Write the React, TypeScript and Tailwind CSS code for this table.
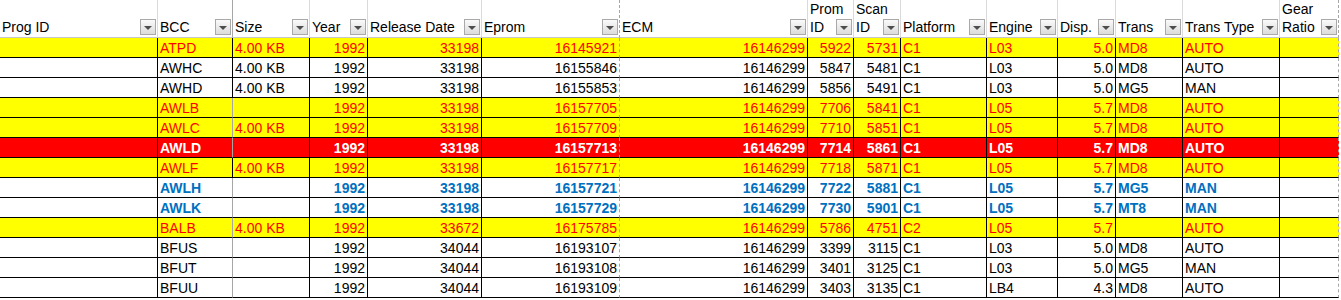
import React from "react";

type Tone = "yellow" | "white" | "red" | "blue";

type Row = {
  cells: string[];
  tone: Tone;
  // size cell has its own box border on the left
  boxed?: boolean;
};

type Col = {
  label: string[];
  width: number;
  right?: boolean;
  edge: "solid" | "dashed";
};

const cols: Col[] = [
  { label: ["Prog ID"], width: 158, edge: "solid" },
  { label: ["BCC"], width: 75, edge: "solid" },
  { label: ["Size"], width: 77, edge: "solid" },
  { label: ["Year"], width: 58, right: true, edge: "solid" },
  { label: ["Release Date"], width: 114, right: true, edge: "solid" },
  { label: ["Eprom"], width: 138, right: true, edge: "dashed" },
  { label: ["ECM"], width: 188, right: true, edge: "solid" },
  { label: ["Prom", "ID"], width: 46, right: true, edge: "solid" },
  { label: ["Scan", "ID"], width: 47, right: true, edge: "solid" },
  { label: ["Platform"], width: 86, edge: "solid" },
  { label: ["Engine"], width: 71, edge: "solid" },
  { label: ["Disp."], width: 58, right: true, edge: "solid" },
  { label: ["Trans"], width: 67, edge: "solid" },
  { label: ["Trans Type"], width: 97, edge: "solid" },
  { label: ["Gear", "Ratio"], width: 59, edge: "dashed" },
];

const rows: Row[] = [
  { tone: "yellow", boxed: true, cells: ["", "ATPD", "4.00 KB", "1992", "33198", "16145921", "16146299", "5922", "5731", "C1", "L03", "5.0", "MD8", "AUTO", ""] },
  { tone: "white", boxed: true, cells: ["", "AWHC", "4.00 KB", "1992", "33198", "16155846", "16146299", "5847", "5481", "C1", "L03", "5.0", "MD8", "AUTO", ""] },
  { tone: "white", boxed: true, cells: ["", "AWHD", "4.00 KB", "1992", "33198", "16155853", "16146299", "5856", "5491", "C1", "L03", "5.0", "MG5", "MAN", ""] },
  { tone: "yellow", cells: ["", "AWLB", "", "1992", "33198", "16157705", "16146299", "7706", "5841", "C1", "L05", "5.7", "MD8", "AUTO", ""] },
  { tone: "yellow", cells: ["", "AWLC", "4.00 KB", "1992", "33198", "16157709", "16146299", "7710", "5851", "C1", "L05", "5.7", "MD8", "AUTO", ""] },
  { tone: "red", cells: ["", "AWLD", "", "1992", "33198", "16157713", "16146299", "7714", "5861", "C1", "L05", "5.7", "MD8", "AUTO", ""] },
  { tone: "yellow", boxed: true, cells: ["", "AWLF", "4.00 KB", "1992", "33198", "16157717", "16146299", "7718", "5871", "C1", "L05", "5.7", "MD8", "AUTO", ""] },
  { tone: "blue", cells: ["", "AWLH", "", "1992", "33198", "16157721", "16146299", "7722", "5881", "C1", "L05", "5.7", "MG5", "MAN", ""] },
  { tone: "blue", cells: ["", "AWLK", "", "1992", "33198", "16157729", "16146299", "7730", "5901", "C1", "L05", "5.7", "MT8", "MAN", ""] },
  { tone: "yellow", cells: ["", "BALB", "4.00 KB", "1992", "33672", "16175785", "16146299", "5786", "4751", "C2", "L05", "5.7", "", "AUTO", ""] },
  { tone: "white", cells: ["", "BFUS", "", "1992", "34044", "16193107", "16146299", "3399", "3115", "C1", "L03", "5.0", "MD8", "AUTO", ""] },
  { tone: "white", cells: ["", "BFUT", "", "1992", "34044", "16193108", "16146299", "3401", "3125", "C1", "L03", "5.0", "MG5", "MAN", ""] },
  { tone: "white", cells: ["", "BFUU", "", "1992", "34044", "16193109", "16146299", "3403", "3135", "C1", "LB4", "4.3", "MD8", "AUTO", ""] },
];

const toneClass: Record<Tone, string> = {
  yellow: "bg-[#ffff00] text-[#ff0000]",
  white: "bg-white text-black",
  red: "bg-[#ff0000] text-white font-bold",
  blue: "bg-white text-[#0070c0] font-bold",
};

function FilterButton() {
  return (
    <span className="absolute right-[1px] bottom-[2px] flex h-[16px] w-[16px] items-center justify-center border border-[#a9a9a9] bg-linear-to-b from-[#fafafa] to-[#dcdcdc]">
      <span className="mt-[1px] h-0 w-0 border-x-[4px] border-t-[4px] border-x-transparent border-t-[#4d4d4d]" />
    </span>
  );
}

export default function App() {
  return (
    <div className="h-[300px] w-[1341px] overflow-hidden bg-white font-['Liberation_Sans',Arial,sans-serif] text-[14px] leading-[18px] text-black">
      <table className="table-fixed border-separate border-spacing-0" style={{ width: 1339 }}>
        <colgroup>
          {cols.map((c, i) => (
            <col key={i} style={{ width: c.width }} />
          ))}
        </colgroup>
        <thead>
          <tr className="h-[37px]">
            {cols.map((c, i) => (
              <th
                key={i}
                className={
                  "relative overflow-hidden border-r border-b border-b-[#c6c6c6] px-[2px] pb-[1px] text-left align-bottom font-normal whitespace-nowrap " +
                  (c.edge === "dashed"
                    ? "[border-right-style:dashed] border-r-[#a6a6a6]"
                    : i === 1
                    ? "border-r-[#a6a6a6]"
                    : "border-r-[#dadada]")
                }
              >
                {c.label.map((l, j) => (
                  <div key={j}>{l}</div>
                ))}
                <FilterButton />
              </th>
            ))}
          </tr>
        </thead>
        <tbody>
          {rows.map((r, ri) => (
            <tr key={ri} className={"h-[20px] " + toneClass[r.tone]}>
              {r.cells.map((v, ci) => {
                const c = cols[ci];
                let edge = "border-r-black";
                if (c.edge === "dashed") edge = "[border-right-style:dashed] border-r-[#a6a6a6]";
                else if (ci === 1 && !r.boxed) edge = "border-r-[#a6a6a6]";
                return (
                  <td
                    key={ci}
                    className={
                      "overflow-hidden border-r border-b border-b-black px-[2px] py-0 whitespace-nowrap " +
                      edge +
                      (c.right ? " text-right" : " text-left")
                    }
                  >
                    {v}
                  </td>
                );
              })}
            </tr>
          ))}
        </tbody>
      </table>
    </div>
  );
}
